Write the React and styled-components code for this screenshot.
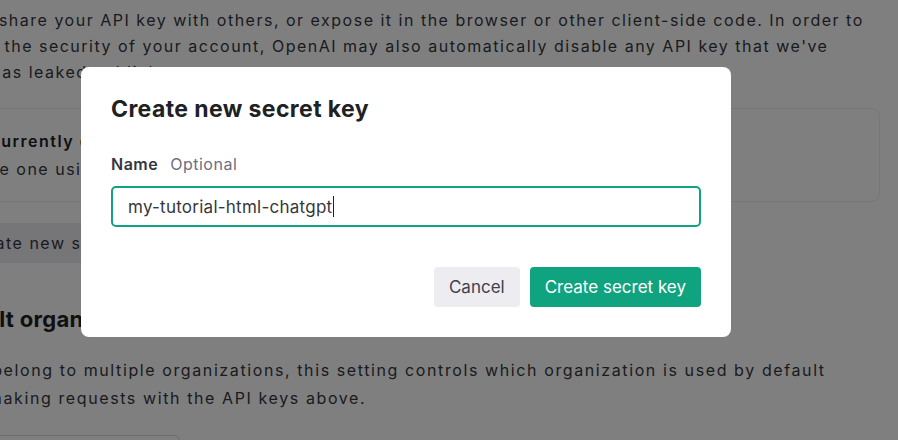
import React from "react";
import styled, { createGlobalStyle } from "styled-components";

const GlobalStyle = createGlobalStyle`
  html, body {
    margin: 0;
    padding: 0;
    background: #ffffff;
    overflow: hidden;
  }
  body {
    font-family: Inter, "Noto Sans", "Liberation Sans", sans-serif;
    color: #353740;
  }
  * {
    box-sizing: border-box;
  }
`;

const Page = styled.div`
  width: 898px;
  height: 440px;
  overflow: hidden;
  padding-top: 7px;
  letter-spacing: 1.5px;
`;

const Column = styled.div`
  margin-left: -66px;
  width: 946px;
  display: flex;
  flex-direction: column;
  align-items: flex-start;
`;

const Para = styled.p`
  margin: 0 0 ${(p) => p.gap || 0}px 0;
  font-size: 16px;
  line-height: ${(p) => p.lh || 26}px;
  letter-spacing: ${(p) => p.ls || 1.5}px;
  white-space: nowrap;
`;

const Line = styled.span`
  display: block;
  font-weight: ${(p) => (p.bold ? 600 : 400)};
  color: ${(p) => (p.bold ? "#202123" : "inherit")};
`;

const EmptyBox = styled.div`
  width: 100%;
  border: 1px solid #ececf1;
  border-radius: 8px;
  padding: 18px 16px;
  font-size: 16px;
  line-height: 28px;
  white-space: nowrap;
  margin-bottom: 21px;
`;

const GrayButton = styled.button`
  height: 40px;
  padding: 0 12px;
  border: none;
  border-radius: 4px;
  background: #ececf1;
  color: #353740;
  font-family: inherit;
  font-size: 16px;
  letter-spacing: 1.5px;
  margin-bottom: 42px;
  display: flex;
  align-items: center;
`;

const Heading = styled.h2`
  margin: 0 0 23px 0;
  font-size: 22px;
  line-height: 28px;
  font-weight: 700;
  letter-spacing: 0.3px;
  color: #202123;
`;

const SelectBox = styled.div`
  width: 246px;
  height: 40px;
  border: 1px solid #d9d9e3;
  border-radius: 6px;
`;

const Overlay = styled.div`
  position: fixed;
  inset: 0;
  background: rgba(0, 0, 0, 0.5);
  display: flex;
  align-items: flex-start;
  padding: 67px 0 0 81px;
`;

const Modal = styled.div`
  width: 650px;
  height: 270px;
  background: #ffffff;
  border-radius: 8px;
  padding: 28px 30px 30px 30px;
  display: flex;
  flex-direction: column;
`;

const Title = styled.h3`
  margin: 0 0 29px 0;
  font-size: 23px;
  line-height: 28px;
  font-weight: 700;
  letter-spacing: 0.4px;
  color: #202123;
`;

const Label = styled.div`
  font-size: 16px;
  line-height: 24px;
  margin-bottom: 10px;
  display: flex;
  gap: 12px;
`;

const LabelName = styled.span`
  font-weight: 600;
  letter-spacing: 0.5px;
  color: #353740;
`;

const LabelHint = styled.span`
  color: #6e6e80;
  letter-spacing: 0.5px;
`;

const Field = styled.div`
  height: 41px;
  border: 2px solid #10a37f;
  border-radius: 5px;
  padding: 0 15px;
  display: flex;
  align-items: center;
  font-size: 17px;
  letter-spacing: 0.25px;
  color: #353740;
  margin-bottom: 40px;
`;

const Caret = styled.span`
  display: inline-block;
  width: 1px;
  height: 21px;
  background: #202123;
  margin-left: 1px;
`;

const Actions = styled.div`
  display: flex;
  justify-content: flex-end;
  gap: 10px;
`;

const Button = styled.button`
  height: 40px;
  padding: 0 15px;
  border: none;
  border-radius: 4px;
  font-family: inherit;
  font-size: 17px;
  background: ${(p) => (p.primary ? "#10a37f" : "#ececf1")};
  color: ${(p) => (p.primary ? "#ffffff" : "#40414f")};
  cursor: pointer;
`;

export default function App() {
  return (
    <>
      <GlobalStyle />
      <Page>
        <Column>
          <Para gap={23}>
            <Line>Do not share your API key with others, or expose it in the browser or other client-side code. In order to</Line>
            <Line>protect the security of your account, OpenAI may also automatically disable any API key that we've</Line>
            <Line>found has leaked publicly.</Line>
          </Para>
          <EmptyBox>
            <Line bold>You currently do not have any API keys</Line>
            <Line>Create one using the button below to get started.</Line>
          </EmptyBox>
          <GrayButton>+ Create new secret key</GrayButton>
          <Heading>Default organization</Heading>
          <Para gap={23} lh={28} ls={1.6}>
            <Line>If you belong to multiple organizations, this setting controls which organization is used by default</Line>
            <Line>when making requests with the API keys above.</Line>
          </Para>
          <SelectBox />
        </Column>
      </Page>
      <Overlay>
        <Modal>
          <Title>Create new secret key</Title>
          <Label>
            <LabelName>Name</LabelName>
            <LabelHint>Optional</LabelHint>
          </Label>
          <Field>
            my-tutorial-html-chatgpt
            <Caret />
          </Field>
          <Actions>
            <Button>Cancel</Button>
            <Button primary>Create secret key</Button>
          </Actions>
        </Modal>
      </Overlay>
    </>
  );
}
